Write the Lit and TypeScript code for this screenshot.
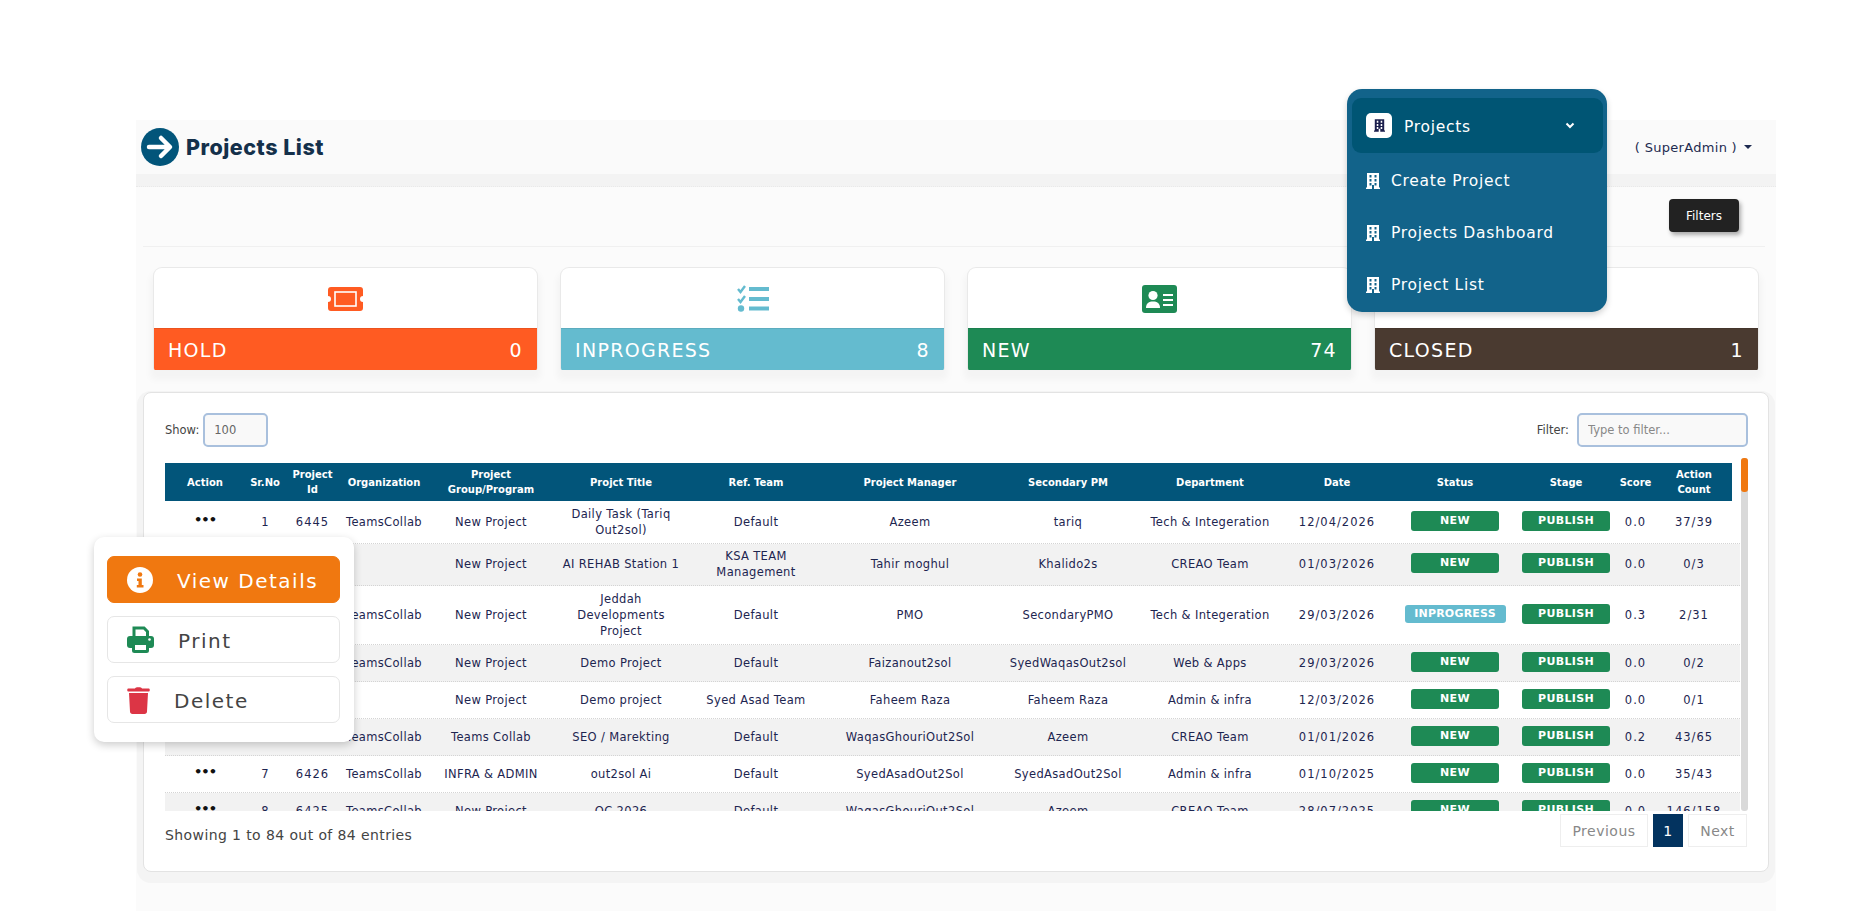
import { LitElement, html, css, svg } from "lit";
import { customElement } from "lit/decorators.js";

type Row = { dots: boolean; sr: string; id: string; org: string; group: string; title: string; team: string; pm: string; spm: string; dept: string; date: string; status: string; score: string; count: string };

const r = (dots: boolean, sr: string, id: string, org: string, group: string, title: string, team: string, pm: string, spm: string, dept: string, date: string, status: string, score: string, count: string): Row =>
  ({ dots, sr, id, org, group, title, team, pm, spm, dept, date, status, score, count });

const ROWS: Row[] = [
  r(true, "1", "6445", "TeamsCollab", "New Project", "Daily Task (Tariq\nOut2sol)", "Default", "Azeem", "tariq", "Tech & Integeration", "12/04/2026", "NEW", "0.0", "37/39"),
  r(false, "", "", "", "New Project", "AI REHAB Station 1", "KSA TEAM\nManagement", "Tahir moghul", "Khalido2s", "CREAO Team", "01/03/2026", "NEW", "0.0", "0/3"),
  r(false, "", "", "TeamsCollab", "New Project", "Jeddah\nDevelopments\nProject", "Default", "PMO", "SecondaryPMO", "Tech & Integeration", "29/03/2026", "INPROGRESS", "0.3", "2/31"),
  r(false, "", "", "TeamsCollab", "New Project", "Demo Project", "Default", "Faizanout2sol", "SyedWaqasOut2sol", "Web & Apps", "29/03/2026", "NEW", "0.0", "0/2"),
  r(false, "", "", "", "New Project", "Demo project", "Syed Asad Team", "Faheem Raza", "Faheem Raza", "Admin & infra", "12/03/2026", "NEW", "0.0", "0/1"),
  r(false, "", "", "TeamsCollab", "Teams Collab", "SEO / Marekting", "Default", "WaqasGhouriOut2Sol", "Azeem", "CREAO Team", "01/01/2026", "NEW", "0.2", "43/65"),
  r(true, "7", "6426", "TeamsCollab", "INFRA & ADMIN", "out2sol Ai", "Default", "SyedAsadOut2Sol", "SyedAsadOut2Sol", "Admin & infra", "01/10/2025", "NEW", "0.0", "35/43"),
  r(true, "8", "6425", "TeamsCollab", "New Project", "QC 2026", "Default", "WaqasGhouriOut2Sol", "Azeem", "CREAO Team", "28/07/2025", "NEW", "0.0", "146/158"),
];

const HEAD = ["Action", "Sr.No", "Project\nId", "Organization", "Project\nGroup/Program", "Projct Title", "Ref. Team", "Project Manager", "Secondary PM", "Department", "Date", "Status", "Stage", "Score", "Action\nCount"];

const building = (cls: string) => html`<svg class=${cls} viewBox="0 0 14 16"><path fill-rule="evenodd" fill="currentColor" d="M1 0H13V14.5H14V16H0V14.5H1ZM3.5 2V4.5H5.5V2ZM8.5 2V4.5H10.5V2ZM3.5 6V8.5H5.5V6ZM8.5 6V8.5H10.5V6ZM3.5 10V12.5H5.5V10ZM8.5 10V12.5H10.5V10ZM6 12V16H8V12Z"/></svg>`;

const ticket = svg`<path fill="#ff5b22" fill-rule="evenodd" d="M3 0H32A3 3 0 0 1 35 3V9A3 3 0 0 0 35 15V21A3 3 0 0 1 32 24H3A3 3 0 0 1 0 21V15A3 3 0 0 0 0 9V3A3 3 0 0 1 3 0Z"/><rect x="7" y="5" width="21" height="14" fill="none" stroke="#fff" stroke-width="1.6"/>`;
const listCheck = svg`<g fill="none" stroke="#64bbcf"><path stroke-width="2.4" d="M1 4L3.5 7L8 1M1 14L3.5 17L8 11"/><path stroke-width="4" d="M12 4H32M12 14H32M12 23.5H32"/></g><circle cx="4" cy="23.5" r="3.2" fill="#64bbcf"/>`;
const idCard = svg`<rect width="35" height="28" rx="3" fill="#1e8a55"/><circle cx="11" cy="10.5" r="4.6" fill="#fff"/><path fill="#fff" d="M4 23C4 18 7 16.5 11 16.5S18 18 18 23Z"/><path stroke="#fff" stroke-width="2" d="M21 10H31M21 15H31M21 20H31"/>`;

@customElement("app-root")
export class AppRoot extends LitElement {
  static styles = css`
    :host { display: block; position: relative; width: 1862px; height: 911px; overflow: hidden; background: #fff; font-family: "DejaVu Sans", sans-serif; color: #1d2550; }
    * { box-sizing: border-box; }
    .frame { margin-left: 136px; width: 1640px; height: 911px; padding-top: 120px; background: #fbfbfb; background-clip: content-box; display: flex; flex-direction: column; }
    .top { height: 54px; display: flex; align-items: center; padding: 0 24px 0 5px; background: #fafafa; flex: none; }
    .logo { width: 38px; height: 38px; flex: none; }
    .title { margin-left: 7px; font-family: Inter, sans-serif; font-size: 21.5px; font-weight: 800; letter-spacing: 0.5px; color: #14304a; }
    .user { margin-left: auto; display: flex; align-items: center; gap: 7px; font-size: 13px; letter-spacing: 0.3px; color: #1d2a50; }
    .caret { width: 0; height: 0; border: 4px solid transparent; border-top-color: #1d2a50; border-bottom: 0; }
    .band { height: 13px; background: #f3f3f3; flex: none; border-bottom: 1px dotted #e9e9e9; }
    .bar { height: 60px; margin-left: 7px; margin-right: 11px; padding: 12px 26px 0 0; border-bottom: 1px solid #f0f0f0; display: flex; justify-content: flex-end; align-items: flex-start; flex: none; }
    .filters { width: 70px; height: 33px; display: flex; align-items: center; justify-content: center; border-radius: 4px; background: #222; color: #fff; font-size: 12px; box-shadow: 2px 3px 4px #aaa; }
    .cards { margin: 20px 17px 0; display: grid; grid-template-columns: repeat(4, 1fr); gap: 22px; flex: none; }
    .card { height: 103px; background: #fff; border: 1px solid #e9e9e9; border-bottom: 0; border-radius: 9px 9px 2px 2px; box-shadow: 0 7px 7px 3px rgba(0, 0, 0, 0.03); display: flex; flex-direction: column; overflow: hidden; }
    .card-icon { flex: 1; display: flex; align-items: center; justify-content: center; padding-top: 1px; }
    .card-bar { height: 42px; display: flex; align-items: center; justify-content: space-between; padding: 0 14px 0 14px; color: #fff; font-size: 19px; letter-spacing: 1.3px; flex: none; border-top: 1px solid rgba(0, 0, 0, 0.08); }
    .hold { background: #ff5b22; } .prog { background: #64bbcf; } .fresh { background: #1e8a55; } .closed { background: #4a3a30; }
    .panel { margin: 22px 7px 0 7px; height: 480px; flex: none; background: #fff; border: 1px solid #e3e3e3; border-radius: 8px; box-shadow: 0 5px 0 6px #f4f4f4; padding: 20px 20px 0 21px; }
    .tools { height: 34px; display: flex; align-items: center; font-size: 11.5px; color: #444; }
    .tools label { margin-right: 4px; }
    .spacer { flex: 1; }
    input { font: inherit; height: 34px; border: 2px solid #a9c0dd; border-radius: 5px; background: #f9f9f9; color: #666; outline: none; padding: 0 9px; }
    input::placeholder { color: #888; opacity: 1; }
    .show { width: 65px; }
    .filter { width: 171px; margin-left: 4px; }
    .table-wrap { display: flex; margin-top: 16px; height: 348px; }
    .scroll { width: 1575px; height: 348px; overflow: hidden; flex: none; }
    .row, .head { display: grid; grid-template-columns: 80px 40px 55px 88px 126px 134px 136px 172px 144px 140px 114px 122px 100px 39px 78px 1fr; align-items: center; text-align: center; white-space: pre-line; }
    .head { height: 38px; margin-right: 8px; background: #02557a; color: #fff; font-size: 10px; font-weight: 700; line-height: 15px; }
    .row { min-height: 37px; padding: 4.75px 0; font-size: 11.5px; letter-spacing: 0.35px; line-height: 16px; border-bottom: 1px dotted #d4d4d4; background: #fff; }
    .row:nth-child(even) { background: #f2f2f2; }
    .num { letter-spacing: 1px; }
    .dots { color: #111; font-size: 13px; letter-spacing: -1px; line-height: 12px; font-weight: 700; margin-top: -4px; }
    .badge { justify-self: center; height: 20px; width: 88px; border-radius: 3px; background: #1e8a55; color: #fff; font-size: 11px; font-weight: 700; line-height: 20px; margin-bottom: 2px; }
    .badge.ip { width: 101px; height: 18px; line-height: 18px; background: #64bbcf; letter-spacing: 0.2px; }
    .track { position: relative; margin-left: 1px; margin-top: -5px; width: 7px; height: 353px; background: #d9d9d9; border-radius: 3px; flex: none; }
    .thumb { height: 34px; background: #f07810; border-radius: 3px; }
    .foot { display: flex; align-items: flex-start; margin-top: 3px; }
    .info { margin-top: 13px; font-size: 14px; letter-spacing: 0.4px; color: #444; }
    .pager { margin-left: auto; margin-right: 1px; display: flex; gap: 5px; }
    .pg { height: 33px; display: flex; align-items: center; justify-content: center; border: 1px solid #eee; font-size: 14px; letter-spacing: 0.5px; color: #888; background: #fff; }
    .pg.prev { width: 88px; } .pg.next { width: 59px; }
    .pg.cur { width: 30px; background: #03335f; border-color: #03335f; color: #fff; }
    .menu { position: absolute; left: 1347px; top: 89px; width: 260px; height: 223px; padding: 9px 4px 0 5px; background: #12638a; border-radius: 15px; box-shadow: 0 3px 6px rgba(0, 0, 0, 0.18); color: #fff; font-size: 15.5px; letter-spacing: 0.7px; }
    .active { height: 55px; margin-bottom: 2px; display: flex; align-items: center; padding: 0 28px 0 14px; background: #005574; border-radius: 9px; }
    .active-label { padding-top: 2px; }
    .chip { width: 26px; height: 25px; margin-right: 12px; background: #fff; color: #1c1f4d; border-radius: 5px; display: flex; align-items: center; justify-content: center; }
    .chip-i { width: 11px; height: 15px; }
    .chev { margin-left: auto; width: 10px; height: 7px; }
    .item { height: 52px; display: flex; align-items: center; gap: 11px; padding-left: 14px; }
    .item-i { width: 14px; height: 16px; flex: none; }
    .actions { position: absolute; left: 94px; top: 537px; width: 260px; height: 205px; padding: 19px 14px 0 13px; background: #fff; border-radius: 10px; box-shadow: 0 3px 8px rgba(0, 0, 0, 0.2); display: flex; flex-direction: column; gap: 13px; }
    .act { height: 47px; display: flex; align-items: center; gap: 24px; padding-left: 19px; border: 1px solid #e6e6e6; border-radius: 7px; font-size: 20px; letter-spacing: 1.5px; color: #444; }
    .act span { padding-top: 2px; }
    .act.on { background: #f07810; border-color: #f07810; color: #fff; }
    .svg-none { flex: none; }
  `;

  private cell(row: Row) {
    return html`<div class="row">
      <div class="dots">${row.dots ? "•••" : ""}</div>
      <div>${row.sr}</div><div class="num">${row.id}</div><div>${row.org}</div><div>${row.group}</div><div>${row.title}</div><div>${row.team}</div>
      <div>${row.pm}</div><div>${row.spm}</div><div>${row.dept}</div><div class="num">${row.date}</div>
      <div class="badge ${row.status === "NEW" ? "" : "ip"}">${row.status}</div>
      <div class="badge">PUBLISH</div>
      <div class="num">${row.score}</div><div class="num">${row.count}</div>
    </div>`;
  }

  private card(cls: string, label: string, n: string, w: number, h: number, icon: unknown) {
    return html`<div class="card">
      <div class="card-icon"><svg width=${w} height=${h} viewBox="0 0 ${w} ${h}">${icon}</svg></div>
      <div class="card-bar ${cls}"><span>${label}</span><span>${n}</span></div>
    </div>`;
  }

  render() {
    return html`
      <div class="frame">
        <div class="top">
          <svg class="logo" viewBox="0 0 38 38"><circle cx="19" cy="19" r="19" fill="#02557a"/><path d="M8 19H28M20 10L29 19L20 28" fill="none" stroke="#fff" stroke-width="4.5" stroke-linecap="round" stroke-linejoin="round"/></svg>
          <span class="title">Projects List</span>
          <span class="user">( SuperAdmin ) <i class="caret"></i></span>
        </div>
        <div class="band"></div>
        <div class="bar"><div class="filters">Filters</div></div>
        <div class="cards">
          ${this.card("hold", "HOLD", "0", 35, 24, ticket)}
          ${this.card("prog", "INPROGRESS", "8", 32, 27, listCheck)}
          ${this.card("fresh", "NEW", "74", 35, 28, idCard)}
          ${this.card("closed", "CLOSED", "1", 35, 28, "")}
        </div>
        <div class="panel">
          <div class="tools">
            <label>Show:</label><input class="show" value="100" />
            <span class="spacer"></span>
            <label>Filter:</label><input class="filter" placeholder="Type to filter..." />
          </div>
          <div class="table-wrap">
            <div class="scroll">
              <div class="head">${HEAD.map((h) => html`<div>${h}</div>`)}</div>
              <div>${ROWS.map((row) => this.cell(row))}</div>
            </div>
            <div class="track"><div class="thumb"></div></div>
          </div>
          <div class="foot">
            <div class="info">Showing 1 to 84 out of 84 entries</div>
            <div class="pager">
              <div class="pg prev">Previous</div>
              <div class="pg cur">1</div>
              <div class="pg next">Next</div>
            </div>
          </div>
        </div>
      </div>

      <div class="menu">
        <div class="active">
          <span class="chip">${building("chip-i")}</span>
          <span class="active-label">Projects</span>
          <svg class="chev" viewBox="0 0 10 7"><path d="M1.5 1.5L5 5L8.5 1.5" fill="none" stroke="#fff" stroke-width="2"/></svg>
        </div>
        <div class="item">${building("item-i")}<span>Create Project</span></div>
        <div class="item">${building("item-i")}<span>Projects Dashboard</span></div>
        <div class="item">${building("item-i")}<span>Project List</span></div>
      </div>

      <div class="actions">
        <div class="act on">
          <svg class="svg-none" width="26" height="26" viewBox="0 0 26 26"><circle cx="13" cy="13" r="13" fill="#fff"/><circle cx="13" cy="7.5" r="2.3" fill="#f07810"/><path d="M10 11.5H14.8V18H16.5V20.5H9.8V18H11.5V14H10Z" fill="#f07810"/></svg>
          <span>View Details</span>
        </div>
        <div class="act">
          <svg class="svg-none" width="27" height="27" viewBox="0 0 27 27"><path d="M7 12V2H17L20.5 5.5V12" fill="#fff" stroke="#1e8a55" stroke-width="3"/><rect y="10" width="27" height="12" rx="3" fill="#1e8a55"/><circle cx="22.5" cy="13.5" r="1.3" fill="#fff"/><rect x="6.5" y="17.5" width="14" height="8" rx="1" fill="#fff" stroke="#1e8a55" stroke-width="3"/></svg>
          <span>Print</span>
        </div>
        <div class="act">
          <svg class="svg-none" width="23" height="28" viewBox="0 0 23 28"><path d="M8 2.5C8 .8 15 .8 15 2.5H22C23 2.5 23 5.5 22 5.5H1C0 5.5 0 2.5 1 2.5Z" fill="#dc3545"/><path d="M2 7H21L20 25.5C20 27 19 28 17.5 28H5.5C4 28 3 27 3 25.5Z" fill="#dc3545"/></svg>
          <span>Delete</span>
        </div>
      </div>
    `;
  }
}
